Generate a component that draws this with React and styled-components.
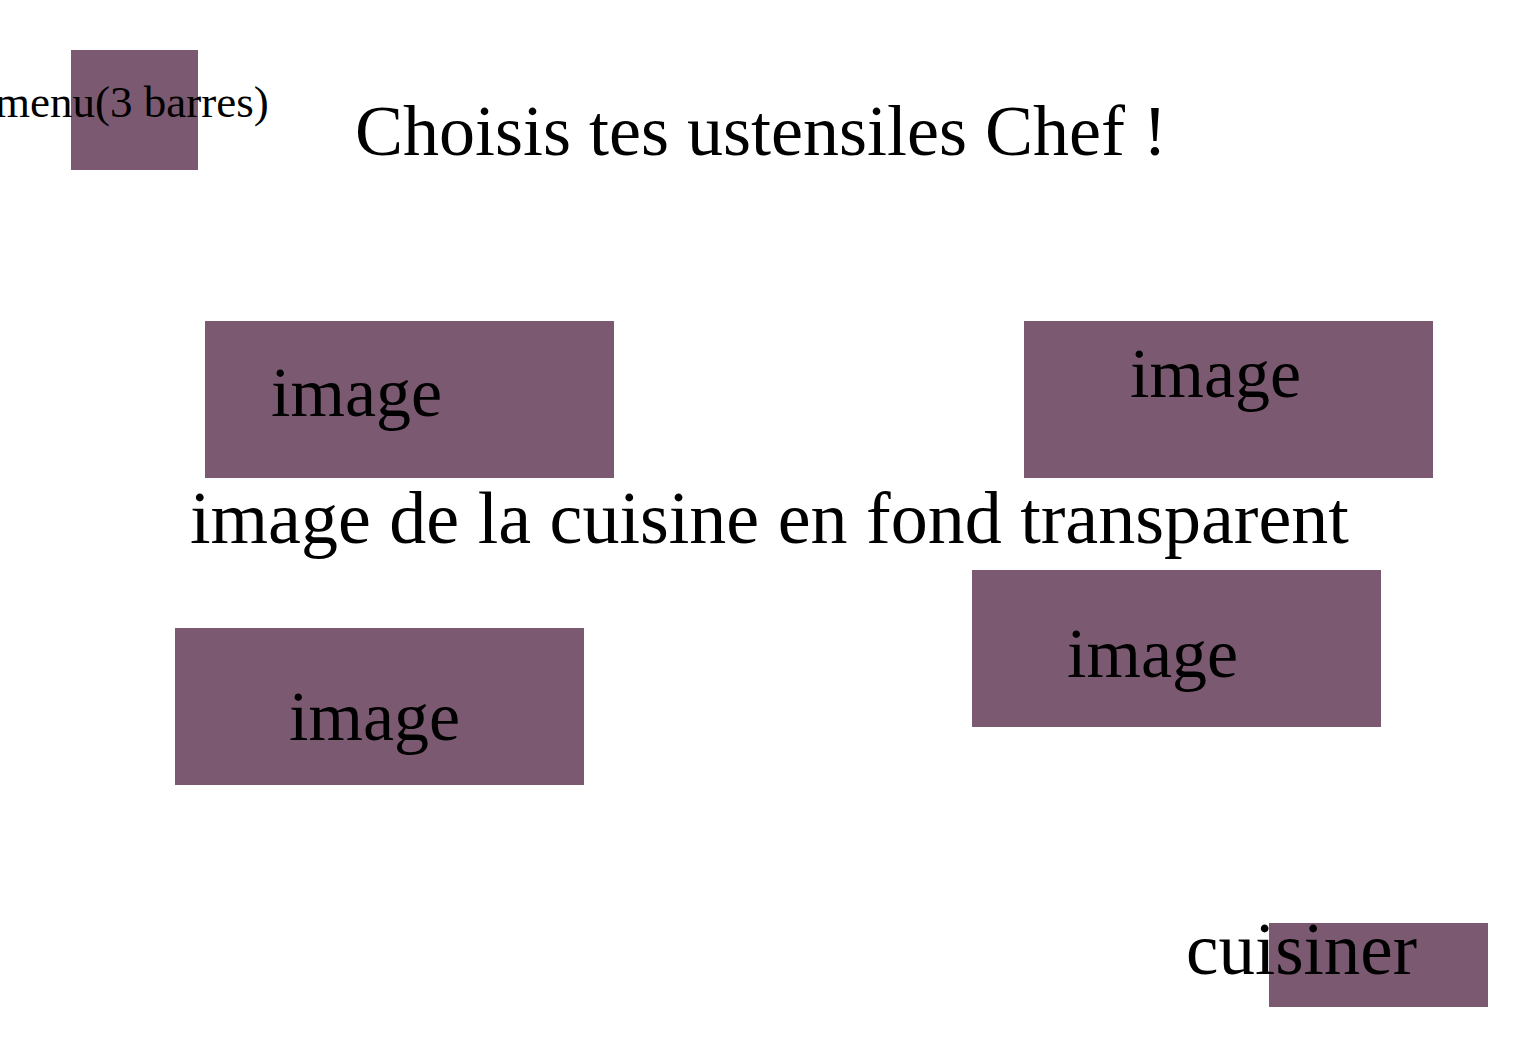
import React from 'react';
import styled, { createGlobalStyle } from 'styled-components';

const GlobalStyle = createGlobalStyle`
  html, body {
    margin: 0;
    padding: 0;
    background: #ffffff;
  }
  body {
    font-family: "Liberation Serif", "Times New Roman", serif;
    color: #000;
  }
`;

const PLUM = '#7b5a71';

const Board = styled.main`
  display: flex;
  flex-direction: column;
  width: 1535px;
  height: 1063px;
  overflow: hidden;
  background: #fff;
`;

/* en-tête : menu + titre */
const Header = styled.header`
  display: flex;
  align-items: flex-start;
  padding: 50px 0 0 71px;
`;

const MenuButton = styled.div`
  position: relative;
  flex: none;
  width: 127px;
  height: 120px;
  background: ${PLUM};
`;

const MenuLabel = styled.span`
  position: absolute;
  left: -76px;
  top: 30px;
  font-size: 45px;
  line-height: 1;
  white-space: nowrap;
`;

const Title = styled.h1`
  margin: 45px 0 0 157px;
  font-size: 72px;
  font-weight: 400;
  line-height: 1;
  white-space: nowrap;
`;

/* rangées d'ustensiles */
const Row = styled.section`
  display: flex;
  align-items: flex-start;
  gap: ${(p) => p.$gap}px;
  margin-top: ${(p) => p.$top}px;
  padding-left: ${(p) => p.$left}px;
`;

const ImageBox = styled.div`
  flex: none;
  box-sizing: border-box;
  width: 409px;
  height: 157px;
  margin-top: ${(p) => p.$offset || 0}px;
  padding: ${(p) => p.$pt}px 0 0 ${(p) => p.$pl}px;
  background: ${PLUM};
`;

const Caption = styled.span`
  display: block;
  font-size: 70px;
  line-height: 1;
  white-space: nowrap;
`;

const Background = styled.p`
  margin: 3px 0 0;
  padding-left: 190px;
  font-size: 74px;
  line-height: 1;
  white-space: nowrap;
`;

/* pied : bouton cuisiner */
const Footer = styled.footer`
  display: flex;
  justify-content: flex-end;
  margin-top: 138px;
  padding-right: 47px;
`;

const CookButton = styled.div`
  position: relative;
  width: 219px;
  height: 84px;
  background: ${PLUM};
`;

const CookLabel = styled.span`
  position: absolute;
  left: -83px;
  top: -10px;
  font-size: 73px;
  line-height: 1;
  white-space: nowrap;
`;

function App() {
  return (
    <>
      <GlobalStyle />
      <Board>
        <Header>
          <MenuButton>
            <MenuLabel>menu(3 barres)</MenuLabel>
          </MenuButton>
          <Title>Choisis tes ustensiles Chef !</Title>
        </Header>

        <Row $top={151} $left={205} $gap={410}>
          <ImageBox $pt={37} $pl={66}>
            <Caption>image</Caption>
          </ImageBox>
          <ImageBox $pt={18} $pl={106}>
            <Caption>image</Caption>
          </ImageBox>
        </Row>

        <Background>image de la cuisine en fond transparent</Background>

        <Row $top={15} $left={175} $gap={388}>
          <ImageBox $offset={58} $pt={54} $pl={114}>
            <Caption>image</Caption>
          </ImageBox>
          <ImageBox $pt={49} $pl={95}>
            <Caption>image</Caption>
          </ImageBox>
        </Row>

        <Footer>
          <CookButton>
            <CookLabel>cuisiner</CookLabel>
          </CookButton>
        </Footer>
      </Board>
    </>
  );
}

export default App;
